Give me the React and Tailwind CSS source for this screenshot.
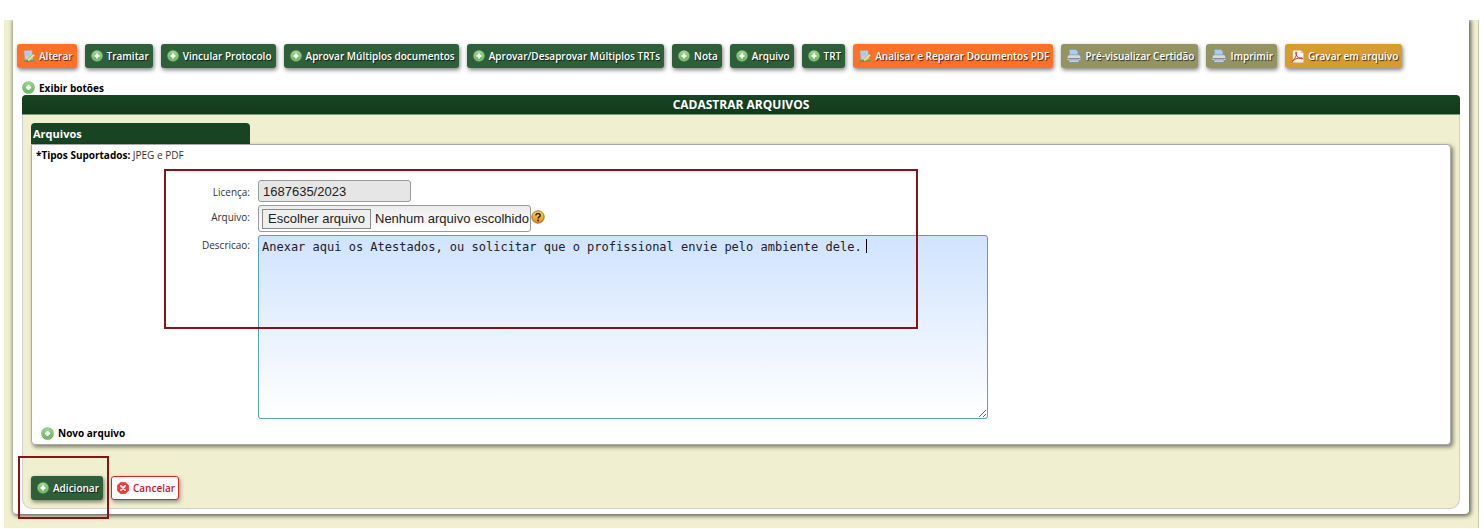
import { useState } from 'react';

const AddIcon = ({ className = 'w-3 h-3' }) => (
  <svg viewBox="0 0 12 12" className={`shrink-0 ${className}`} aria-hidden="true">
    <defs>
      <radialGradient id="addFill" cx="0.5" cy="0.3" r="0.75">
        <stop offset="0" stopColor="#a5dc9b" />
        <stop offset="0.6" stopColor="#74bb6a" />
        <stop offset="1" stopColor="#559f51" />
      </radialGradient>
    </defs>
    <circle cx="6" cy="6" r="5.8" fill="url(#addFill)" />
    <circle cx="6" cy="6" r="4.6" fill="none" stroke="#a9d9a2" strokeWidth="0.6" opacity="0.7" />
    <path d="M6 3.6v4.8M3.6 6h4.8" stroke="#fff" strokeWidth="1.8" />
  </svg>
);

const EditIcon = () => (
  <svg viewBox="0 0 12 12" className="w-3 h-3 shrink-0" aria-hidden="true">
    <path d="M1 .8l7.8-.6 1.4 9.2-8.2 1.2z" fill="#b9cfe3" stroke="#8ea5b8" strokeWidth="0.4" />
    <path d="M2.4 3.2l4.6-.4M2.6 5l4-.4" stroke="#9db4c8" strokeWidth="0.5" />
    <path d="M.4 11.8c.2-2.6 2.2-3 4.4-1.6 2.4.6 4.8 0 6.6-.6l.4 2.2z" fill="#6d9a55" />
    <path d="M10.2 3.8l1.8 1.6-5.4 5.4-2.8.8 1-2.6z" fill="#f5e08a" stroke="#a17c33" strokeWidth="0.4" />
    <path d="M3.8 11.6l.5-1.4 1 1z" fill="#3c3c34" />
  </svg>
);

const PrintIcon = () => (
  <svg viewBox="0 0 14 14" className="w-3.5 h-3.5 shrink-0" aria-hidden="true">
    <path d="M2.4 1.2Q2.4.4 3.2.4h5.4L11 2.6V7H2.4z" fill="#a9cdf2" stroke="#6f98c4" strokeWidth="0.5" />
    <path d="M1.6 5.8h10.8q1.4 1.4 1.4 3v2.8H.2V8.8q0-1.6 1.4-3z" fill="#d6d9dd" stroke="#747a82" strokeWidth="0.5" />
    <path d="M.6 9h12.8v1H.6z" fill="#858b93" />
    <path d="M2.2 10.8h9.6l.4 2.6H1.8z" fill="#c3d3e6" stroke="#66717e" strokeWidth="0.5" />
  </svg>
);

const PdfIcon = () => (
  <svg viewBox="0 0 13 13" className="w-3.25 h-3.25 shrink-0" aria-hidden="true">
    <path d="M2 .6h7.8L12.4 3v9.4H2z" fill="#f7f3f0" stroke="#d8cbc2" strokeWidth="0.5" />
    <path d="M9.8.6V3h2.6z" fill="#cfc5bf" />
    <path
      d="M.8 11.8C3.6 9.8 6.2 5 5.4 2.2c-.7-.8-1.1.6-.3 2.5.9 2.2 3.2 4 6.3 4.2 1-.3.2-1.2-1.6-1.1-3 .1-6.7 1.3-9 4z"
      fill="none"
      stroke="#d8322a"
      strokeWidth="1"
    />
  </svg>
);

const CancelIcon = () => (
  <svg viewBox="0 0 12 12" className="w-3 h-3 shrink-0" aria-hidden="true">
    <path d="M3.6.2h4.8l3.4 3.4v4.8l-3.4 3.4H3.6L.2 8.4V3.6z" fill="#f13a3a" stroke="#d91e22" strokeWidth="0.4" />
    <path d="M3.9 3.9l4.2 4.2M8.1 3.9L3.9 8.1" stroke="#fff" strokeWidth="1.8" strokeLinecap="round" />
  </svg>
);

const HelpIcon = () => (
  <svg viewBox="0 0 14 14" className="w-3.5 h-3.5 shrink-0 mb-1" aria-hidden="true">
    <defs>
      <linearGradient id="helpFill" x1="0" y1="0" x2="0" y2="1">
        <stop offset="0" stopColor="#f4e04d" />
        <stop offset="0.5" stopColor="#efb22a" />
        <stop offset="1" stopColor="#ef7a1c" />
      </linearGradient>
    </defs>
    <circle cx="7" cy="7" r="6.2" fill="url(#helpFill)" stroke="#8a6a2c" strokeWidth="0.9" />
    <path d="M4.9 5.4c0-2.6 4.3-2.5 4.3 0 0 1.6-2.1 1.5-2.1 3.1" fill="none" stroke="#2b2417" strokeWidth="1.5" />
    <circle cx="7.1" cy="10.4" r="0.95" fill="#2b2417" />
  </svg>
);

const tones = {
  green: 'bg-[#2f5f3a]',
  orange: 'bg-[#ff7029]',
  olive: 'bg-[#949463]',
  gold: 'bg-[#d59c30]',
};

const actions = [
  { label: 'Alterar', tone: 'orange', Icon: EditIcon },
  { label: 'Tramitar', tone: 'green', Icon: AddIcon },
  { label: 'Vincular Protocolo', tone: 'green', Icon: AddIcon },
  { label: 'Aprovar Múltiplos documentos', tone: 'green', Icon: AddIcon },
  { label: 'Aprovar/Desaprovar Múltiplos TRTs', tone: 'green', Icon: AddIcon },
  { label: 'Nota', tone: 'green', Icon: AddIcon },
  { label: 'Arquivo', tone: 'green', Icon: AddIcon },
  { label: 'TRT', tone: 'green', Icon: AddIcon },
  { label: 'Analisar e Reparar Documentos PDF', tone: 'orange', Icon: EditIcon },
  { label: 'Pré-visualizar Certidão', tone: 'olive', Icon: PrintIcon },
  { label: 'Imprimir', tone: 'olive', Icon: PrintIcon },
  { label: 'Gravar em arquivo', tone: 'gold', Icon: PdfIcon },
];

function ActionButton({ label, tone, Icon }) {
  return (
    <button
      type="button"
      className={`flex items-center gap-1 h-6 pl-1.5 pr-1 rounded-[3px] text-[10px] font-semibold text-white whitespace-nowrap shadow-[1px_2px_4px_rgba(0,0,0,0.5)] [text-shadow:1px_1px_1px_rgba(0,0,0,0.7)] ${tones[tone]}`}
    >
      <Icon />
      {label}
    </button>
  );
}

export default function App() {
  const [descricao, setDescricao] = useState(
    'Anexar aqui os Atestados, ou solicitar que o profissional envie pelo ambiente dele. '
  );
  const [arquivo, setArquivo] = useState('');

  return (
    <div className="bg-white pt-5 pl-1 pr-[5px] font-['Open_Sans',sans-serif] text-[10px] leading-4 text-[#333]">
      <div className="bg-[#f0efd0] px-[9px] pb-3.5 border-r border-[#c9c8b4]">
        <main className="bg-white px-[9px] pt-6 pb-[5px] rounded-b-[4px] shadow-[1px_1px_4px_1px_rgba(0,0,0,0.6)] [clip-path:inset(0_-9px_-14px_-9px)]">
          {/* Ações do protocolo */}
          <div className="flex flex-wrap gap-2 -ml-[5px]">
            {actions.map((action) => (
              <ActionButton key={action.label} {...action} />
            ))}
          </div>

          <button type="button" className="flex items-center gap-1 mt-3 h-[15px] font-bold text-black">
            <AddIcon className="w-[13px] h-[13px]" />
            Exibir botões
          </button>

          <section className="border border-[#cfcfcf] border-t-0 rounded-t-[5px] rounded-b-[10px] bg-[#f0efd0] px-2 pb-2">
            <h1 className="-mx-[9px] h-5 rounded-t-[4px] bg-linear-to-b from-[#184523] to-[#123a1c] border-b border-[#7d9a76] text-center text-[12px] leading-5 font-bold text-white">
              CADASTRAR ARQUIVOS
            </h1>

            <h2 className="mt-2 w-[219px] h-[21px] pl-0.5 rounded-t-[4px] bg-[#174422] text-[11px] leading-[22px] font-bold text-white">
              Arquivos
            </h2>
            <div className="relative rounded-b-[4px] rounded-tr-[4px] border border-[#aaa] bg-white px-1 pt-0.5 pb-[3px] shadow-[2px_2px_4px_rgba(0,0,0,0.5)]">
              <p>
                <b className="text-black">*Tipos Suportados:</b> JPEG e PDF
              </p>

              <div className="mt-[17px] grid grid-cols-[214px_minmax(0,730px)] gap-x-2 gap-y-[3px]">
                <label htmlFor="licenca" className="text-right pt-1">Licença:</label>
                <input
                  id="licenca"
                  readOnly
                  value="1687635/2023"
                  className="w-[153px] h-[22px] px-1 rounded-[3px] border border-[#9a9a9a] bg-[#e6e6e6] font-['Liberation_Sans',sans-serif] text-[13px] text-[#222]"
                />

                <span className="text-right pt-1">Arquivo:</span>
                <div className="flex items-center">
                  <label
                    htmlFor="arquivo"
                    className="flex items-center gap-1 h-[27px] w-[273px] pl-[3px] rounded-[3px] border border-[#9a9a9a] bg-linear-to-b from-[#ececec] to-white font-['Liberation_Sans',sans-serif] text-[13px] text-[#222] whitespace-nowrap"
                  >
                    <input
                      id="arquivo"
                      type="file"
                      className="sr-only"
                      onChange={(e) => setArquivo(e.target.files[0]?.name ?? '')}
                    />
                    <span className="h-5 w-[109px] border border-[#8a8a8a] bg-[#efefef] text-center leading-[18px]">
                      Escolher arquivo
                    </span>
                    <span>{arquivo || 'Nenhum arquivo escolhido'}</span>
                  </label>
                  <HelpIcon />
                </div>

                <label htmlFor="descricao" className="text-right pt-0.5">Descricao:</label>
                <div className="relative">
                  <textarea
                    id="descricao"
                    value={descricao}
                    onChange={(e) => setDescricao(e.target.value)}
                    className="block w-full h-[184px] px-[3px] py-[3px] rounded-[3px] border border-[#5a9fc0] bg-linear-to-b from-[#d0e3ff] to-white font-['DejaVu_Sans_Mono',monospace] text-[12px] leading-4 text-[#222] outline-none caret-transparent"
                  />
                  {/* Cursor de texto */}
                  <span className="pointer-events-none absolute left-[608px] top-1 w-px h-3.5 bg-black" />
                </div>
              </div>

              <button type="button" className="flex items-center gap-1 mt-1.5 ml-[5px] h-4 font-bold text-black">
                <AddIcon className="w-[13px] h-[13px]" />
                Novo arquivo
              </button>

              {/* Destaque dos campos */}
              <div className="pointer-events-none absolute left-[132px] top-6 w-[754px] h-[160px] border-2 border-[#8b1118]" />
            </div>

            <div className="relative mt-[31px] flex gap-2">
              <ActionButton label="Adicionar" tone="green" Icon={AddIcon} />
              <button
                type="button"
                className="flex items-center gap-1 h-6 pl-[5px] pr-[3px] rounded-[3px] border border-[#d3272d] bg-white font-semibold text-[#c8161d] shadow-[1px_2px_4px_rgba(0,0,0,0.4)]"
              >
                <CancelIcon />
                Cancelar
              </button>

              {/* Destaque do botão */}
              <div className="pointer-events-none absolute -left-[13px] -top-5 w-[91px] h-[63px] border-2 border-[#8b1118]" />
            </div>
          </section>
        </main>
      </div>
    </div>
  );
}
